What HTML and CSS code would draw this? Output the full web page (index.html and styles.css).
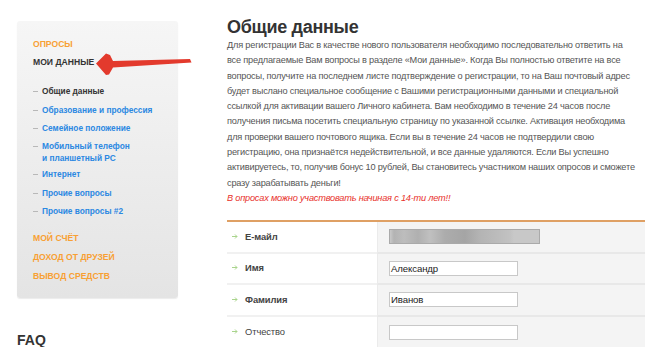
FILE: index.html
```html
<html>
  <head>
    <meta charset="utf-8" />
    <link rel="stylesheet" href="styles.css">
  </head>

  <body>
    <div class="layout">
      <div class="side-col">
        <nav class="sidebar">
          <ul class="menu">
            <li class="menu-item"><a class="orange">Опросы</a></li>
            <li class="menu-item"><a class="current">Мои данные</a></li>
          </ul>
          <ul class="submenu">
            <li class="active">Общие данные</li>
            <li>Образование и профессия</li>
            <li>Семейное положение</li>
            <li class="wrap">Мобильный телефон<br>и планшетный PC</li>
            <li>Интернет</li>
            <li>Прочие вопросы</li>
            <li>Прочие вопросы #2</li>
          </ul>
          <ul class="menu">
            <li class="menu-item"><a class="orange">Мой счёт</a></li>
            <li class="menu-item"><a class="orange">Доход от друзей</a></li>
            <li class="menu-item"><a class="orange">Вывод средств</a></li>
          </ul>
          <svg class="pointer" width="102" height="28" viewBox="0 0 102 28">
            <polygon points="4,12.5 14,2.5 18,4 21,10 98,8 99.5,11.5 21,16.5 17,23.5 14,24" fill="#e33a2d" />
          </svg>
        </nav>
        <h3 class="faq">FAQ</h3>
      </div>

      <main class="content">
        <h1>Общие данные</h1>
        <p class="intro">
          Для регистрации Вас в качестве нового пользователя необходимо последовательно ответить на<br>
          все предлагаемые Вам вопросы в разделе «Мои данные». Когда Вы полностью ответите на все<br>
          вопросы, получите на последнем листе подтверждение о регистрации, то на Ваш почтовый адрес<br>
          будет выслано специальное сообщение с Вашими регистрационными данными и специальной<br>
          ссылкой для активации вашего Личного кабинета. Вам необходимо в течение 24 часов после<br>
          получения письма посетить специальную страницу по указанной ссылке. Активация необходима<br>
          для проверки вашего почтового ящика. Если вы в течение 24 часов не подтвердили свою<br>
          регистрацию, она признаётся недействительной, и все данные удаляются. Если Вы успешно<br>
          активируетесь, то, получив бонус 10 рублей, Вы становитесь участником наших опросов и сможете<br>
          сразу зарабатывать деньги!
        </p>
        <p class="warning">В опросах можно участвовать начиная с 14-ти лет!!</p>

        <div class="form">
          <div class="row">
            <div class="label strong"><svg class="mark" width="6" height="5" viewBox="0 0 6 5"><path d="M0 2.5h5M3 0.5l2 2-2 2" fill="none" stroke="#a9d48c" stroke-width="1"/></svg>Е-майл</div>
            <div class="field"><div class="input blurred"></div></div>
          </div>
          <div class="row">
            <div class="label strong"><svg class="mark" width="6" height="5" viewBox="0 0 6 5"><path d="M0 2.5h5M3 0.5l2 2-2 2" fill="none" stroke="#a9d48c" stroke-width="1"/></svg>Имя</div>
            <div class="field"><div class="input">Александр</div></div>
          </div>
          <div class="row">
            <div class="label strong"><svg class="mark" width="6" height="5" viewBox="0 0 6 5"><path d="M0 2.5h5M3 0.5l2 2-2 2" fill="none" stroke="#a9d48c" stroke-width="1"/></svg>Фамилия</div>
            <div class="field"><div class="input">Иванов</div></div>
          </div>
          <div class="row">
            <div class="label"><svg class="mark" width="6" height="5" viewBox="0 0 6 5"><path d="M0 2.5h5M3 0.5l2 2-2 2" fill="none" stroke="#a9d48c" stroke-width="1"/></svg>Отчество</div>
            <div class="field"><div class="input"></div></div>
          </div>
        </div>
      </main>
    </div>
  </body>
</html>
```

FILE: styles.css
```css
:root {
  --color-orange: #f8a033;
  --color-blue: #2b88e2;
  --color-text: #555555;
  --color-dark: #333333;
  --color-red: #e8312b;
}

* {
  box-sizing: border-box;
}

body {
  margin: 0;
  font-family: 'Liberation Sans', Arial, sans-serif;
  color: var(--color-text);
  background: #ffffff;
  overflow: hidden;
}

ul {
  list-style: none;
  margin: 0;
  padding: 0;
}

.layout {
  display: flex;
  align-items: flex-start;
}

.side-col {
  width: 161px;
  margin: 21px 0 0 17px;
  flex-shrink: 0;
}

.sidebar {
  position: relative;
  padding: 13.5px 8px 13px 16px;
  border-radius: 3px;
  background: linear-gradient(#f6f6f6, #e4e4e4);
  box-shadow: 0 1px 1px rgba(0, 0, 0, 0.08);
}

.menu-item {
  font-size: 8.6px;
  font-weight: 700;
  line-height: 18.8px;
  text-transform: uppercase;
}

.menu-item .orange {
  color: var(--color-orange);
}

.menu-item .current {
  color: var(--color-dark);
}

.submenu {
  margin: 10px 0 8px;
}

.submenu li {
  position: relative;
  padding: 3.1px 0 3.1px 9px;
  font-size: 8.3px;
  font-weight: 700;
  line-height: 12.4px;
  color: var(--color-blue);
}

.submenu li.wrap {
  padding-top: 2px;
  padding-bottom: 0.5px;
}

.submenu li:before {
  content: '';
  position: absolute;
  left: 0;
  top: 9px;
  width: 5px;
  height: 1px;
  background: #b8b8b8;
}

.submenu li.wrap:before {
  top: 8px;
}

.submenu li.active {
  color: var(--color-dark);
}

.pointer {
  position: absolute;
  left: 75px;
  top: 30px;
}

.faq {
  margin: 34px 0 0;
  font-size: 14px;
  line-height: 17px;
  font-weight: 700;
  color: var(--color-dark);
}

.content {
  width: 418px;
  margin-left: 49px;
  padding-top: 16px;
}

.content h1 {
  margin: 0;
  font-size: 18px;
  letter-spacing: -0.3px;
  line-height: 22px;
  font-weight: 700;
  color: var(--color-dark);
}

.intro {
  margin: 0;
  font-size: 9.2px;
  letter-spacing: -0.2px;
  line-height: 15.3px;
  white-space: nowrap;
}

.warning {
  margin: 0;
  font-size: 9.2px;
  letter-spacing: -0.2px;
  line-height: 15.3px;
  font-style: italic;
  color: var(--color-red);
}

.form {
  margin-top: 14px;
  border-top: 2px solid #dfa064;
}

.row {
  display: flex;
  height: 31.5px;
}

.label {
  width: 150px;
  display: flex;
  align-items: center;
  padding: 0 0 2px 3px;
  font-size: 9.4px;
  letter-spacing: -0.1px;
  color: #444444;
  border-bottom: 2px solid #f1f1f1;
}

.label.strong {
  font-weight: 700;
}

.mark {
  margin: 0 7px 0 2px;
}

.field {
  flex: 1;
  display: flex;
  align-items: center;
  padding: 0 0 1px 11px;
  background: #f4f4f4;
  border-left: 1px solid #ebebeb;
  border-bottom: 2px solid #e8e8e8;
}

.row:last-child .label,
.row:last-child .field {
  border-bottom: none;
}

.input {
  width: 129px;
  height: 15px;
  padding-left: 1px;
  border: 1px solid #c8c8c8;
  background: #ffffff;
  font-size: 9.6px;
  letter-spacing: -0.1px;
  line-height: 13px;
  color: #222222;
}

.input.blurred {
  width: 151px;
  border-color: #aaaaaa;
  background: linear-gradient(90deg,
    #c9c9c9 0, #b3b3b3 4px, #bdbdbd 14px, #b0b0b0 28px, #c0c0c0 40px,
    #acacac 55px, #a5a5a5 75px, #b4b4b4 90px, #bcbcbc 108px, #c2c2c2 120px,
    #c8c8c8 124px, #c8c8c8 100%);
}
```
